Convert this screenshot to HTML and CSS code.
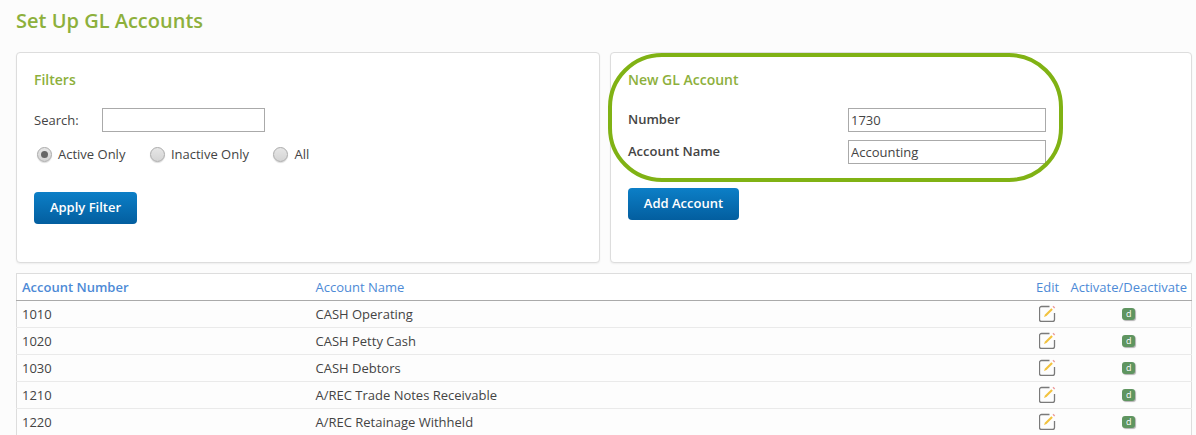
FILE: index.html
```html
<!DOCTYPE html>
<html lang="en">
<head>
<meta charset="utf-8">
<title>Set Up GL Accounts</title>
<link rel="stylesheet" href="styles.css">
</head>
<body>
<svg class="defs" width="0" height="0" aria-hidden="true">
  <symbol id="edit" viewBox="0 0 17 17">
    <path d="M10.500 1.500H2.500a2 2 0 0 0-2 2v11a2 2 0 0 0 2 2h11a2 2 0 0 0 2-2V8" fill="none" stroke="#7a7a7a" stroke-width="1.300"/>
    <path d="M5 12l1-2.500L12.300 3.200l1.500 1.500-6.300 6.300z" fill="#f2c23e"/>
    <path d="M13.500 1.800l1-1 1.700 1.700-1 1z" fill="#ec9a9a"/>
  </symbol>
</svg>
<h1 class="title">Set Up GL Accounts</h1>
<div class="panels">
  <section class="panel">
    <h2 class="panel-title">Filters</h2>
    <div class="search-row">
      <label class="search-label">Search:</label>
      <input class="field search-input" type="text">
    </div>
    <div class="radio-row">
      <span class="radio-item"><span class="radio checked"></span>Active Only</span>
      <span class="radio-item"><span class="radio"></span>Inactive Only</span>
      <span class="radio-item"><span class="radio"></span>All</span>
    </div>
    <button class="btn btn-filter">Apply Filter</button>
  </section>
  <section class="panel panel-new">
    <h2 class="panel-title">New GL Account</h2>
    <div class="form-row first">
      <label class="form-label">Number</label>
      <input class="field form-input" type="text" value="1730">
    </div>
    <div class="form-row">
      <label class="form-label">Account Name</label>
      <input class="field form-input" type="text" value="Accounting">
    </div>
    <button class="btn btn-add">Add Account</button>
    <div class="highlight"></div>
  </section>
</div>
<table class="accounts">
  <thead>
    <tr>
      <th class="col-number">Account Number</th>
      <th class="col-name">Account Name</th>
      <th class="col-edit">Edit</th>
      <th class="col-act">Activate/Deactivate</th>
    </tr>
  </thead>
  <tbody>
    <tr><td>1010</td><td>CASH Operating</td><td class="center"><svg class="edit-icon"><use href="#edit"/></svg></td><td class="center"><span class="badge">d</span></td></tr>
    <tr><td>1020</td><td>CASH Petty Cash</td><td class="center"><svg class="edit-icon"><use href="#edit"/></svg></td><td class="center"><span class="badge">d</span></td></tr>
    <tr><td>1030</td><td>CASH Debtors</td><td class="center"><svg class="edit-icon"><use href="#edit"/></svg></td><td class="center"><span class="badge">d</span></td></tr>
    <tr><td>1210</td><td>A/REC Trade Notes Receivable</td><td class="center"><svg class="edit-icon"><use href="#edit"/></svg></td><td class="center"><span class="badge">d</span></td></tr>
    <tr><td>1220</td><td>A/REC Retainage Withheld</td><td class="center"><svg class="edit-icon"><use href="#edit"/></svg></td><td class="center"><span class="badge">d</span></td></tr>
  </tbody>
</table>
</body>
</html>
```
FILE: styles.css
```css
* { box-sizing: border-box; }
html, body { height: 435px; overflow: hidden; }
body {
  margin: 0;
  padding: 7px 4px 0 16px;
  background: #fcfcfc;
  font-family: "Open Sans", sans-serif;
  font-size: 13px;
  color: #444;
}
.defs { position: absolute; }
.title {
  margin: 0 0 18px;
  height: 27px;
  line-height: 27px;
  font-size: 20px;
  font-weight: 600;
  color: #8db03c;
}
.panels { display: flex; gap: 10px; }
.panel {
  position: relative;
  height: 211px;
  padding: 17px 17px 0;
  background: #fff;
  border: 1px solid #ddd;
  border-radius: 4px;
  box-shadow: 0 1px 2px rgba(0,0,0,.06);
}
.panel:first-child { width: 584px; }
.panel-new { width: 582px; padding-right: 0; }
.panel-title {
  margin: 0;
  height: 20px;
  line-height: 20px;
  font-size: 14px;
  font-weight: 600;
  color: #8db03c;
}
.search-row { display: flex; align-items: center; margin-top: 18px; }
.search-label { width: 68px; }
.field {
  height: 24px;
  padding: 1px 2px;
  background: #fff;
  border: 1px solid #aaa;
  font: 13px "Open Sans", sans-serif;
  color: #444;
  outline: none;
}
.search-input { width: 163px; }
.radio-row { display: flex; gap: 24.5px; margin-top: 11px; margin-left: 3px; height: 22px; align-items: center; }
.radio-item { display: flex; align-items: center; gap: 6px; }
.radio {
  width: 15px;
  height: 15px;
  border-radius: 50%;
  border: 1px solid #aaa;
  background: linear-gradient(#e6e6e6, #d4d4d4);
  box-shadow: 0 1px 1px rgba(0,0,0,.15);
  display: flex;
  align-items: center;
  justify-content: center;
}
.radio.checked::after {
  content: "";
  width: 7px;
  height: 7px;
  border-radius: 50%;
  background: #666;
}
.btn {
  display: block;
  height: 32px;
  padding: 0 0 2px;
  border: 0;
  border-radius: 4px;
  background: linear-gradient(#0c7fc7, #035e9f);
  color: #fff;
  font: 600 13px "Open Sans", sans-serif;
}
.btn-filter { width: 103px; margin-top: 27px; }
.btn-add { width: 111px; margin-top: 24px; }
.form-row { display: flex; align-items: center; justify-content: space-between; width: 418px; margin-top: 8px; height: 24px; }
.form-row.first { margin-top: 18px; }
.form-label { font-weight: 600; position: relative; top: -1px; }
.form-input { width: 198px; }
.highlight {
  position: absolute;
  left: -3px;
  top: 0;
  width: 455px;
  height: 129px;
  border: 4px solid #80b214;
  border-radius: 54px;
  pointer-events: none;
}
.accounts {
  width: 1176px;
  margin-top: 10px;
  border-collapse: collapse;
  table-layout: fixed;
  border: 1px solid #ddd;
  border-bottom: 0;
  background: #fdfdfd;
}
.accounts th {
  height: 27px;
  padding: 0 5px;
  font-weight: 400;
  text-align: left;
  color: #4d8ad6;
  background: #fff;
  border-bottom: 1px solid #aaa;
}
.accounts th.col-number { width: 294px; font-weight: 600; }
.accounts th.col-edit { width: 38px; padding: 0; text-align: center; }
.accounts th.col-act { width: 125px; padding: 0; text-align: center; }
.accounts td {
  height: 27px;
  padding: 0 5px;
  border-bottom: 1px solid #eaeaea;
  vertical-align: middle;
}
.accounts td.center { padding: 0; text-align: center; line-height: 0; }
.edit-icon { display: block; width: 17px; height: 17px; margin: 0 auto 2px; }
.badge {
  display: inline-block;
  width: 13px;
  height: 12px;
  line-height: 11px;
  border-radius: 3px;
  background: #5f9560;
  color: #fff;
  font-size: 9px;
  text-align: center;
  box-shadow: 1px 1px 1px rgba(0,0,0,.3);
}
```
